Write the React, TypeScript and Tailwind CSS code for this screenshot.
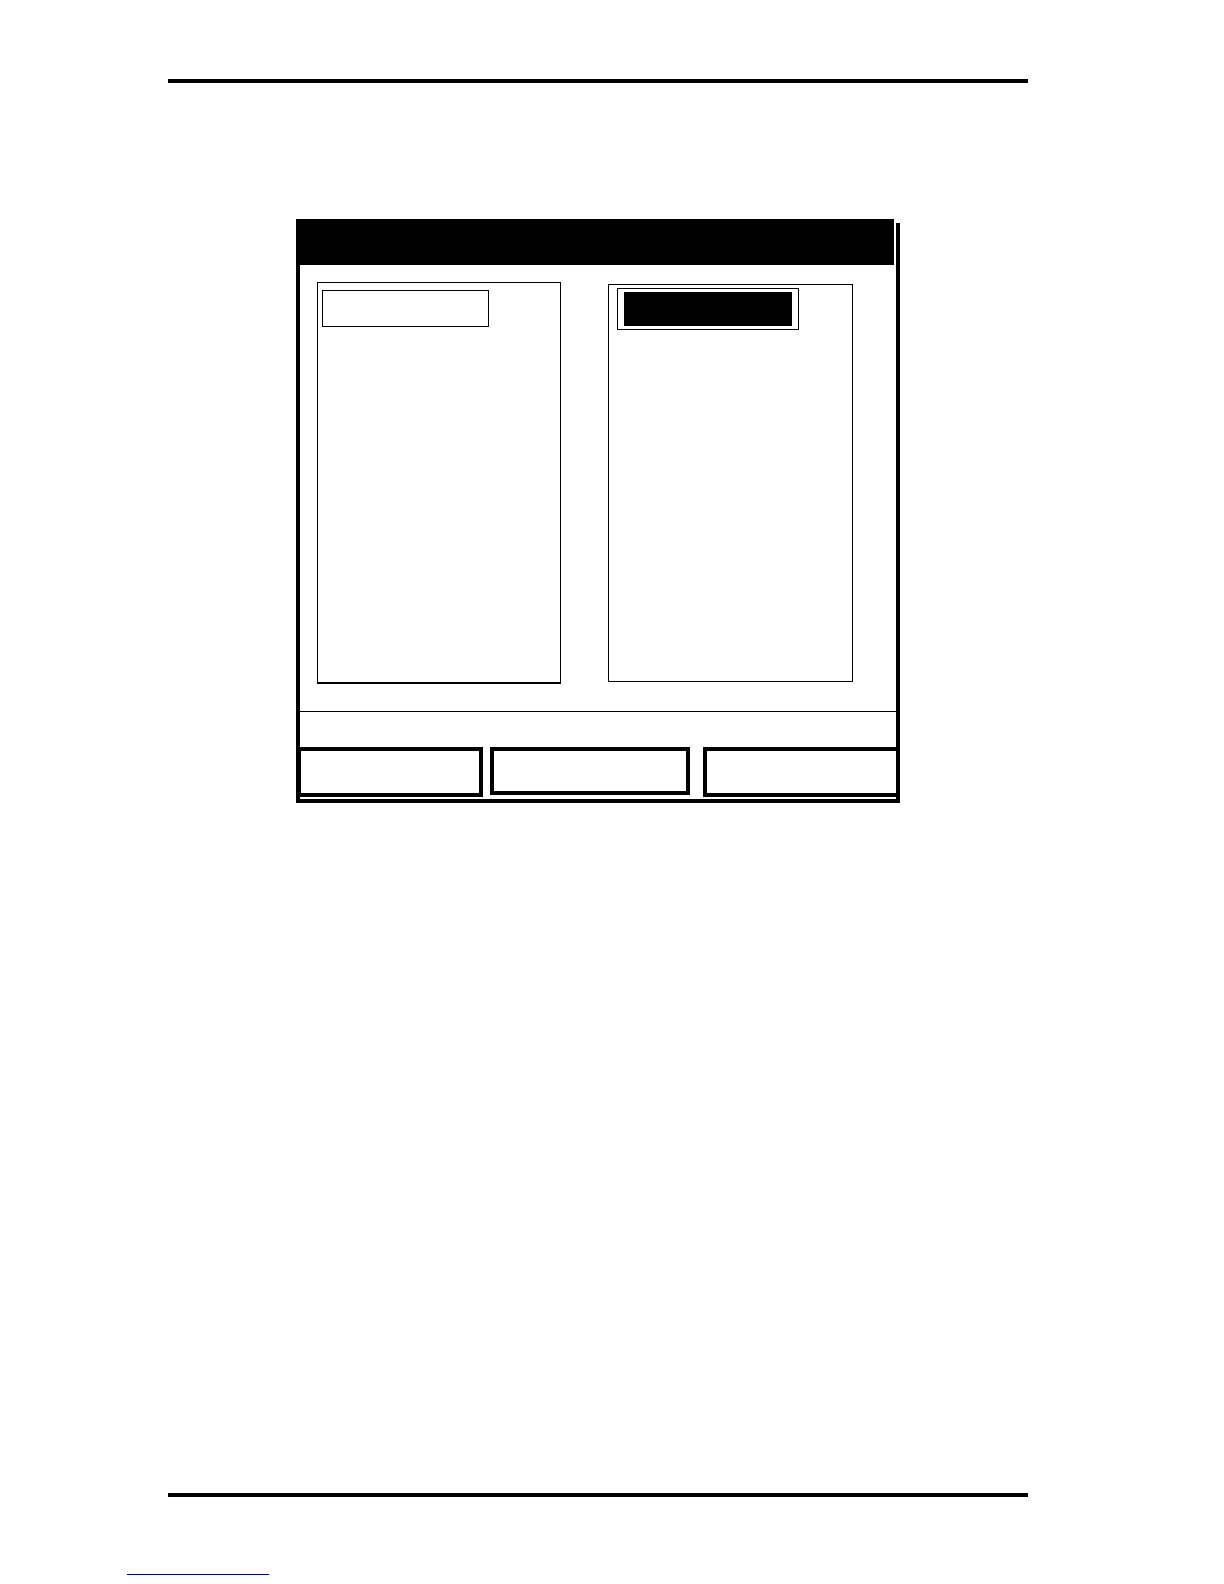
import React from 'react';

// Manual page figure: an empty instrument screen with two list panels and three soft keys

function ListPanel({ selected }: { selected?: boolean }) {
  if (selected) {
    return (
      <div className="ml-[47px] mt-[2px] w-[245px] h-[398px] border border-black">
        <div className="ml-[8px] mt-[3px] w-[182px] h-[42px] border border-black px-[6px] py-[3px]">
          <div className="h-full bg-black" />
        </div>
      </div>
    );
  }
  return (
    <div className="w-[244px] h-[402px] border border-b-2 border-black">
      <div className="ml-[4px] mt-[7px] w-[167px] h-[37px] border border-black" />
    </div>
  );
}

export default function App() {
  return (
    <div className="min-h-[1584px] w-[1224px] bg-white flex flex-col font-['Liberation_Sans',sans-serif]">
      <div className="mt-[79px] ml-[168px] w-[860px] h-[4px] bg-black" />

      <div className="mt-[136px] ml-[296px] w-[604px] h-[584px] border-l-4 border-b-4 border-black flex">
        <div className="w-[596px] flex flex-col">
          <div className="h-[46px] w-[594px] bg-black" />

          <div className="h-[446px] flex items-start pl-[17px] pt-[17px]">
            <ListPanel />
            <ListPanel selected />
          </div>

          <div className="h-px bg-black" />

          <div className="mt-[35px] h-[50px] flex items-start">
            <div className="w-[183px] h-[50px] border-4 border-l border-black" />
            <div className="ml-[7px] w-[200px] h-[48px] border-4 border-black" />
            <div className="ml-[13px] w-[193px] h-[50px] border-4 border-r-0 border-black" />
          </div>
        </div>
        <div className="mt-[4px] w-[4px] bg-black" />
      </div>

      <div className="mt-[690px] ml-[168px] w-[860px] h-[4px] bg-black" />

      <div className="mt-[77px] ml-[127px] w-[142px] h-px bg-[#00008b]" />
    </div>
  );
}
